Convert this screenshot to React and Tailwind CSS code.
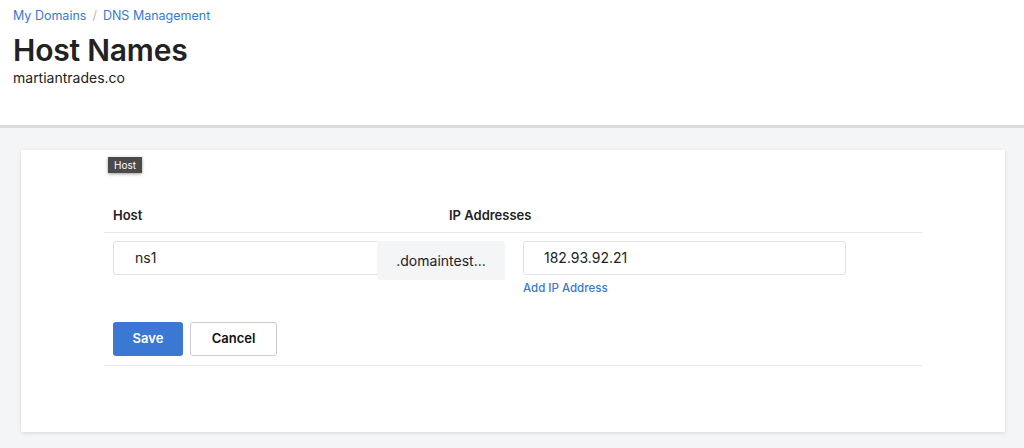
export default function App() {
    return (
        <div className="min-h-[448px] bg-[#f4f5f7] text-[#111] font-['Inter','Noto_Sans',sans-serif]">
            {/* Header */}
            <div className="h-[125px] bg-white px-[13px] pt-[7px]">
                <nav className="flex items-center gap-[6px] text-[12.5px] text-[#3a78d4]">
                    <span>My Domains</span>
                    <span className="text-[#bbb]">/</span>
                    <span>DNS Management</span>
                </nav>
                <h1 className="mt-[6px] text-[30px] font-semibold leading-[36px] text-[#222] tracking-[-0.2px]">Host Names</h1>
                <p className="text-[14px] leading-[20px] text-[#222]">martiantrades.co</p>
            </div>
            <div className="h-[3px] bg-[#dcdcdc]" />

            {/* Card */}
            <div className="pl-[21px] pr-[19px] pt-[22px] pb-[16px]">
                <div className="relative h-[282px] bg-white shadow-[0_1px_4px_rgba(0,0,0,0.12)] px-[83px] pt-[56px]">
                    <div className="absolute left-[87px] top-[7px] bg-[#4a4a4a] px-[6px] py-[2px] text-[10px] leading-[12px] text-white shadow-[0_1px_3px_rgba(0,0,0,0.4)]">
                        Host
                    </div>

                    <div className="border-b border-[#e8e8e8] pb-[6px] pl-[9px] flex text-[13px] font-semibold text-[#222]">
                        <div className="w-[336px]">Host</div>
                        <div>IP Addresses</div>
                    </div>

                    <div className="flex items-start pl-[9px] pt-[8px]">
                        <div className="flex items-start">
                            <div className="w-[264px] h-[34px] border border-[#e2e2e2] rounded-l-[3px] border-r-0 flex items-center pl-[21px] text-[14px] text-[#222]">
                                ns1
                            </div>
                            <div className="w-[128px] h-[39px] bg-[#f4f5f7] rounded-[3px] flex items-center justify-center text-[14px] text-[#222]">
                                .domaintest...
                            </div>
                        </div>
                        <div className="ml-[18px]">
                            <div className="w-[323px] h-[34px] border border-[#e2e2e2] rounded-[3px] flex items-center pl-[20px] text-[14px] text-[#222]">
                                182.93.92.21
                            </div>
                            <div className="mt-[5px] text-[11.5px] font-medium text-[#3a78d4]">Add IP Address</div>
                        </div>
                    </div>

                    <div className="flex gap-[7px] pl-[9px] mt-[25px] pb-[9px] border-b border-[#e8e8e8]">
                        <button className="w-[70px] h-[34px] rounded-[3px] bg-[#3a78d4] text-white text-[13px] font-semibold">Save</button>
                        <button className="w-[87px] h-[34px] rounded-[3px] border border-[#c8ccd0] bg-white text-[#111] text-[13px] font-semibold">Cancel</button>
                    </div>
                </div>
            </div>
        </div>
    );
}
